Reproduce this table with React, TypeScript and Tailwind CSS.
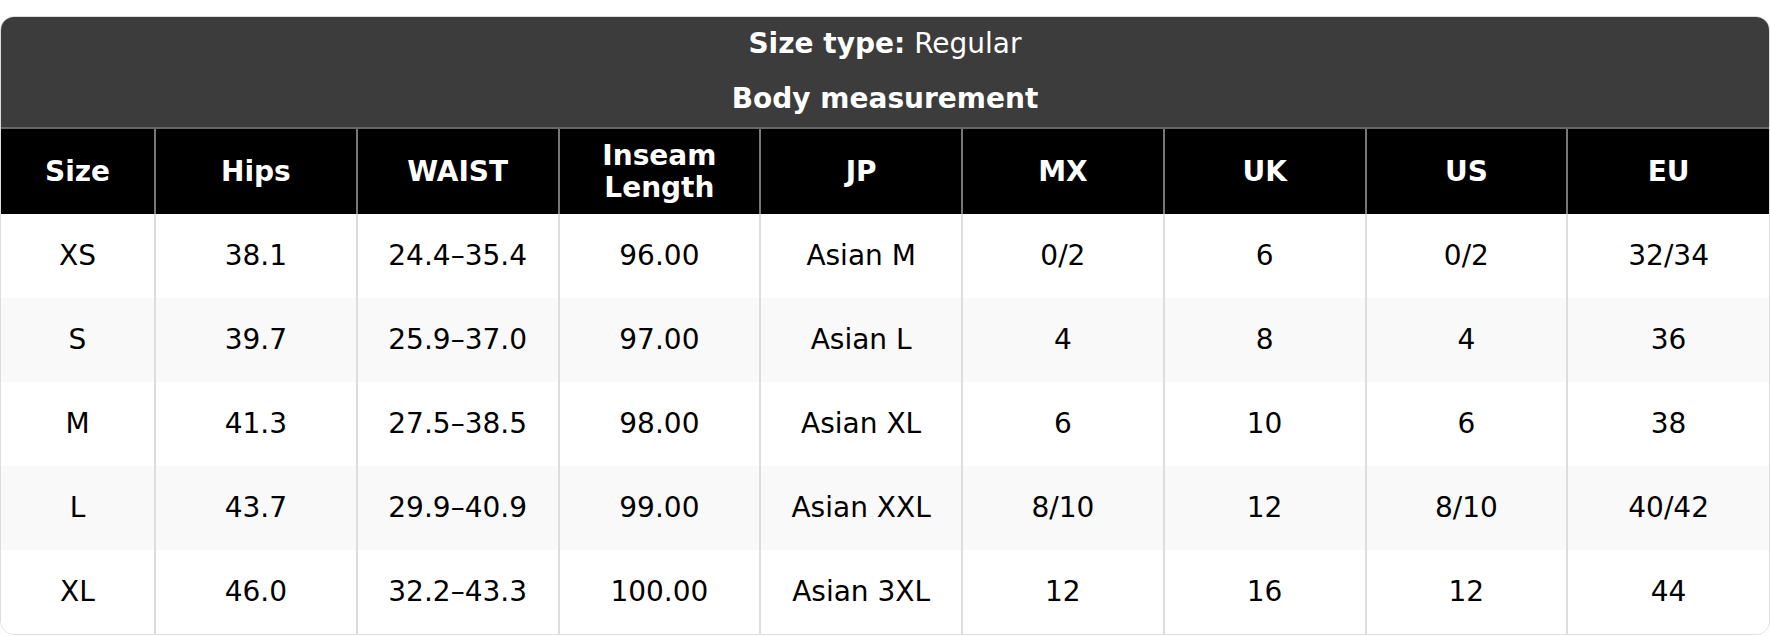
import React from "react";

type Row = {
  size: string;
  hips: string;
  waist: string;
  inseam: string;
  jp: string;
  mx: string;
  uk: string;
  us: string;
  eu: string;
};

const columns: { key: keyof Row; label: React.ReactNode }[] = [
  { key: "size", label: "Size" },
  { key: "hips", label: "Hips" },
  { key: "waist", label: "WAIST" },
  {
    key: "inseam",
    label: (
      <>
        Inseam
        <br />
        Length
      </>
    ),
  },
  { key: "jp", label: "JP" },
  { key: "mx", label: "MX" },
  { key: "uk", label: "UK" },
  { key: "us", label: "US" },
  { key: "eu", label: "EU" },
];

const rows: Row[] = [
  { size: "XS", hips: "38.1", waist: "24.4–35.4", inseam: "96.00", jp: "Asian M", mx: "0/2", uk: "6", us: "0/2", eu: "32/34" },
  { size: "S", hips: "39.7", waist: "25.9–37.0", inseam: "97.00", jp: "Asian L", mx: "4", uk: "8", us: "4", eu: "36" },
  { size: "M", hips: "41.3", waist: "27.5–38.5", inseam: "98.00", jp: "Asian XL", mx: "6", uk: "10", us: "6", eu: "38" },
  { size: "L", hips: "43.7", waist: "29.9–40.9", inseam: "99.00", jp: "Asian XXL", mx: "8/10", uk: "12", us: "8/10", eu: "40/42" },
  { size: "XL", hips: "46.0", waist: "32.2–43.3", inseam: "100.00", jp: "Asian 3XL", mx: "12", uk: "16", us: "12", eu: "44" },
];

export default function App() {
  return (
    <div className="bg-white pt-4 font-['DejaVu_Sans',sans-serif] text-[28px]">
      <div className="overflow-hidden rounded-[14px] border border-[#dddddd]">
        {/* 标题 */}
        <div className="border-b-2 border-[#666666] bg-[#3c3c3c] text-center text-white">
          <div className="flex h-[54px] items-center justify-center">
            <span className="font-bold">Size type:</span>
            <span className="ml-[9px]">Regular</span>
          </div>
          <div className="flex h-[56px] items-center justify-center font-bold">Body measurement</div>
        </div>

        <table className="w-full table-fixed border-collapse">
          <colgroup>
            <col className="w-[154px]" />
            {columns.slice(1).map((c) => (
              <col key={c.key} />
            ))}
          </colgroup>
          <thead>
            <tr className="h-[85px] bg-black text-white">
              {columns.map((c, i) => (
                <th
                  key={c.key}
                  className={`p-0 text-center align-middle font-bold leading-[1.13] ${
                    i > 0 ? "border-l-2 border-[#777777]" : ""
                  }`}
                >
                  {c.label}
                </th>
              ))}
            </tr>
          </thead>
          <tbody>
            {rows.map((r, ri) => (
              <tr key={r.size} className={`h-[84px] ${ri % 2 === 1 ? "bg-[#f9f9f9]" : "bg-white"}`}>
                {columns.map((c, i) => (
                  <td
                    key={c.key}
                    className={`p-0 text-center align-middle text-black ${
                      i > 0 ? "border-l-2 border-[#dddddd]" : ""
                    }`}
                  >
                    {r[c.key]}
                  </td>
                ))}
              </tr>
            ))}
          </tbody>
        </table>
      </div>
    </div>
  );
}
